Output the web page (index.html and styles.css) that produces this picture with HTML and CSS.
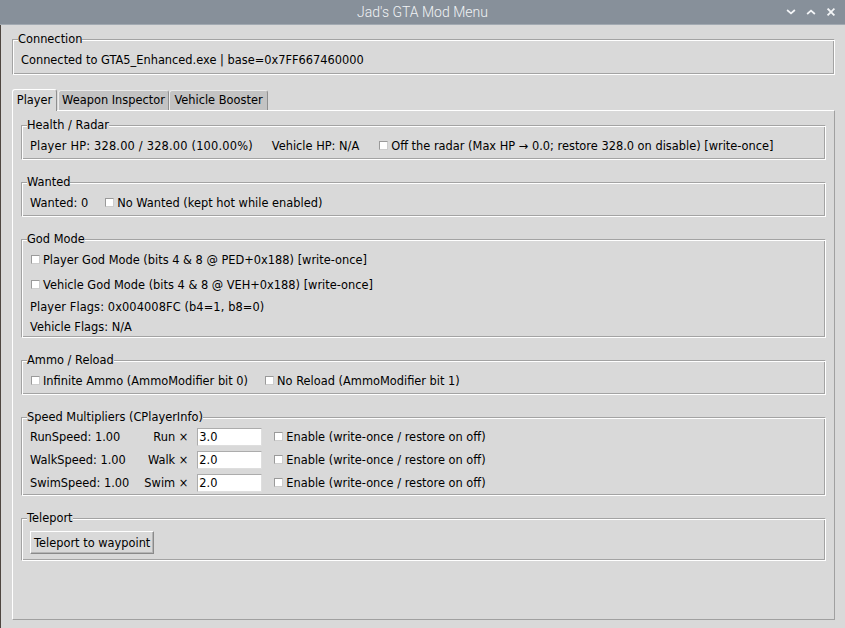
FILE: index.html
```html
<!DOCTYPE html>
<html lang="en">
<head>
<meta charset="utf-8">
<title>Jad's GTA Mod Menu</title>
<link rel="stylesheet" href="styles.css">
</head>
<body>
<div class="window">
  <header class="titlebar">
    <span class="title">Jad's GTA Mod Menu</span>
    <div class="controls">
      <svg viewBox="0 0 10 10" aria-hidden="true"><path d="M1.8 3.6 L5 6.4 L8.2 3.6"/></svg>
      <svg viewBox="0 0 10 10" aria-hidden="true"><path d="M1.8 6.4 L5 3.6 L8.2 6.4"/></svg>
      <svg viewBox="0 0 10 10" aria-hidden="true"><path d="M2.2 2.2 L7.8 7.8 M7.8 2.2 L2.2 7.8"/></svg>
    </div>
  </header>
  <main class="client">
    <fieldset class="group">
      <legend>Connection</legend>
      <div class="gbody conn">
        <div class="row lbl">Connected to GTA5_Enhanced.exe | base=0x7FF667460000</div>
      </div>
    </fieldset>

    <div class="notebook">
      <div class="tabs">
        <div class="tab active tab-player">Player</div>
        <div class="tab tab-weapon">Weapon Inspector</div>
        <div class="tab tab-vehicle">Vehicle Booster</div>
      </div>
      <div class="pane">
        <fieldset class="group">
          <legend>Health / Radar</legend>
          <div class="gbody">
            <div class="row wide">
              <span class="num">Player HP: 328.00 / 328.00 (100.00%)</span>
              <span>Vehicle HP: N/A</span>
              <label class="cb"><span class="box"></span>Off the radar (Max HP → 0.0; restore 328.0 on disable) [write-once]</label>
            </div>
          </div>
        </fieldset>

        <fieldset class="group">
          <legend>Wanted</legend>
          <div class="gbody">
            <div class="row">
              <span>Wanted: 0</span>
              <label class="cb"><span class="box"></span>No Wanted (kept hot while enabled)</label>
            </div>
          </div>
        </fieldset>

        <fieldset class="group">
          <legend>God Mode</legend>
          <div class="gbody tight">
            <div class="row"><label class="cb"><span class="box"></span>Player God Mode (bits 4 &amp; 8 @ PED+0x188) [write-once]</label></div>
            <div class="row"><label class="cb"><span class="box"></span>Vehicle God Mode (bits 4 &amp; 8 @ VEH+0x188) [write-once]</label></div>
            <div class="row lbl"><span class="num-sm">Player Flags: 0x004008FC (b4=1, b8=0)</span></div>
            <div class="row lbl">Vehicle Flags: N/A</div>
          </div>
        </fieldset>

        <fieldset class="group">
          <legend>Ammo / Reload</legend>
          <div class="gbody">
            <div class="row">
              <label class="cb"><span class="box"></span>Infinite Ammo (AmmoModifier bit 0)</label>
              <label class="cb"><span class="box"></span>No Reload (AmmoModifier bit 1)</label>
            </div>
          </div>
        </fieldset>

        <fieldset class="group">
          <legend>Speed Multipliers (CPlayerInfo)</legend>
          <div class="gbody speed">
            <span>RunSpeed: 1.00</span>
            <span class="mul">Run ×</span>
            <input class="entry" type="text" value="3.0">
            <label class="cb"><span class="box"></span>Enable (write-once / restore on off)</label>

            <span>WalkSpeed: 1.00</span>
            <span class="mul">Walk ×</span>
            <input class="entry" type="text" value="2.0">
            <label class="cb"><span class="box"></span>Enable (write-once / restore on off)</label>

            <span>SwimSpeed: 1.00</span>
            <span class="mul">Swim ×</span>
            <input class="entry" type="text" value="2.0">
            <label class="cb"><span class="box"></span>Enable (write-once / restore on off)</label>
          </div>
        </fieldset>

        <fieldset class="group">
          <legend>Teleport</legend>
          <div class="gbody tele">
            <button class="btn" type="button">Teleport to waypoint</button>
          </div>
        </fieldset>
      </div>
    </div>
  </main>
</div>
</body>
</html>
```

FILE: styles.css
```css
* { box-sizing: border-box; }

html, body {
  margin: 0;
  padding: 0;
}

body {
  width: 845px;
  height: 628px;
  overflow: hidden;
  background: #d9d9d9;
  font-family: "DejaVu Sans", "Noto Sans", sans-serif;
  font-size: 11.4px;
  color: #000;
}

.window {
  display: flex;
  flex-direction: column;
  height: 628px;
}

/* ---------- title bar ---------- */
.titlebar {
  flex: none;
  height: 25px;
  background: #87909a;
  border-bottom: 1px solid #a2aab2;
  display: grid;
  grid-template-columns: 1fr auto 1fr;
  align-items: center;
}

.title {
  grid-column: 2;
  font-family: Roboto, "Noto Sans", sans-serif;
  font-weight: 300;
  font-size: 14px;
  color: #f1f3f5;
  line-height: 24px;
}

.controls {
  grid-column: 3;
  justify-self: end;
  display: flex;
  gap: 10px;
  padding-right: 9px;
}

.controls svg {
  display: block;
  width: 10px;
  height: 10px;
  fill: none;
  stroke: #f3f5f7;
  stroke-width: 1.8;
  stroke-linecap: square;
}

/* ---------- client area ---------- */
.client {
  flex: 1;
  display: flex;
  flex-direction: column;
  border-left: 1px solid #4e4640;
  padding: 7px 10px 8px 11px;
}

/* Tk labelframe, groove relief */
.group {
  margin: 0;
  padding: 0;
  min-width: 0;
  border: 1px solid;
  border-color: #a3a3a3 #ffffff #ffffff #a3a3a3;
  box-shadow: inset 1px 1px 0 #ffffff, inset -1px -1px 0 #a3a3a3;
}

.group legend {
  padding: 0;
  margin-left: 5px;
  line-height: 15px;
  background: #d9d9d9;
}

.gbody {
  padding: 0 8px 1px;
}

.gbody.conn {
  padding: 3px 8px 4px;
}

.gbody.tight {
  padding-bottom: 0;
}

.row {
  height: 25px;
  display: flex;
  align-items: center;
  gap: 16px;
  white-space: nowrap;
}

.row.wide { gap: 19px; }

.row.lbl { height: 20px; }

.num { letter-spacing: 0.19px; }
.num-sm { letter-spacing: 0.1px; }

/* checkbutton */
.cb {
  display: inline-flex;
  align-items: center;
  white-space: nowrap;
}

.box {
  flex: none;
  width: 9px;
  height: 9px;
  margin: 0 3px 0 1px;
  background: #ffffff;
  border: 1px solid;
  border-color: #9a9a9a #cdcdcd #cdcdcd #9a9a9a;
}

/* ---------- notebook ---------- */
.notebook {
  flex: 1;
  display: flex;
  flex-direction: column;
  margin-top: 14px;
}

.tabs {
  flex: none;
  height: 21px;
  display: flex;
  align-items: flex-end;
}

.tab {
  height: 20px;
  line-height: 19px;
  padding: 0;
  text-align: center;
  background: #c3c3c3;
  border: 1px solid;
  border-bottom: none;
  border-color: #ececec #8f8f8f #8f8f8f #ececec;
  border-radius: 3px 3px 0 0;
  white-space: nowrap;
}

.tab-player { width: 45px; }
.tab-weapon { width: 111px; margin-left: 1px; }
.tab-vehicle { width: 99px; }

.tab.active {
  height: 22px;
  line-height: 21px;
  background: #d9d9d9;
  border-color: #ffffff #8f8f8f #8f8f8f #ffffff;
  margin-bottom: -1px;
  position: relative;
  z-index: 1;
}

.pane {
  flex: 1;
  display: flex;
  flex-direction: column;
  gap: 15px;
  padding: 7px 8px 0;
  border: 1px solid;
  border-color: #ffffff #a0a0a0 #a0a0a0 #ffffff;
}

/* ---------- speed grid ---------- */
.speed {
  display: grid;
  grid-template-columns: auto auto auto auto;
  grid-auto-rows: 23px;
  align-items: center;
  justify-content: start;
  white-space: nowrap;
}

.mul {
  justify-self: end;
  margin: 0 9px 0 15px;
}

.speed .cb {
  margin-left: 11px;
}

.entry {
  width: 65px;
  height: 18px;
  margin: 0;
  padding: 0 1px;
  font: inherit;
  color: #000;
  background: #ffffff;
  border: 1px solid;
  border-color: #acacac #dedede #dedede #acacac;
  outline: none;
}

/* ---------- button ---------- */
.gbody.tele {
  padding: 5px 8px 6px;
  display: flex;
}

.btn {
  height: 23px;
  padding: 0 3px;
  font: inherit;
  color: #000;
  background: #d9d9d9;
  border: 1px solid;
  border-color: #ffffff #8a8a8a #8a8a8a #ffffff;
  box-shadow: inset -1px -1px 0 #b5b5b5;
}
```
